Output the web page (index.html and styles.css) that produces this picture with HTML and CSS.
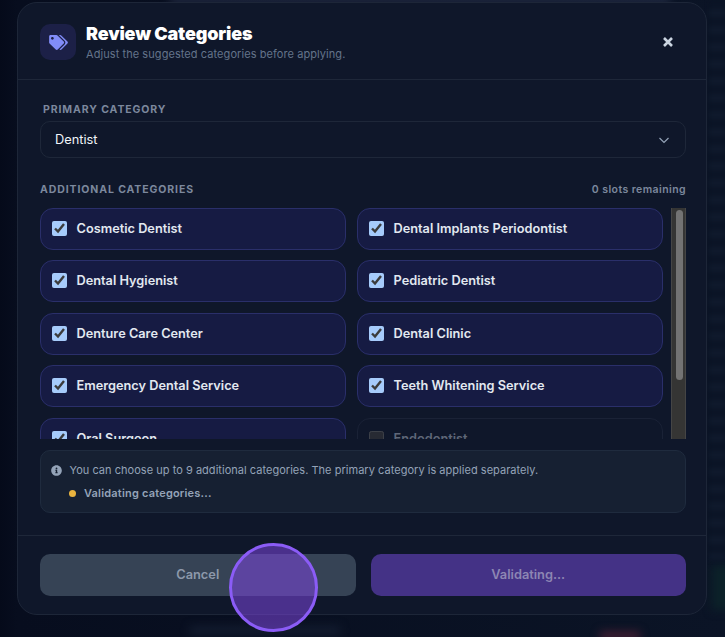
FILE: index.html
```html
<!DOCTYPE html>
<html lang="en">
<head>
<meta charset="utf-8">
<title>Review Categories</title>
<link rel="stylesheet" href="styles.css">
</head>
<body>
<div class="backdrop" aria-hidden="true">
  <span class="glow glow-top"></span>
  <span class="glow glow-bottom"></span>
  <span class="glow glow-red"></span>
  <span class="glow glow-green"></span>
  <span class="stripes"></span>
</div>
<section class="modal">
  <header class="modal-head">
    <div class="head-icon">
      <svg viewBox="0 0 640 512" class="tags"><path d="M497.941 225.941L286.059 14.059A48 48 0 0 0 252.118 0H48C21.49 0 0 21.49 0 48v204.118a48 48 0 0 0 14.059 33.941l211.882 211.882c18.744 18.745 49.136 18.746 67.882 0l204.118-204.118c18.745-18.745 18.745-49.137 0-67.882zM112 160c-26.51 0-48-21.49-48-48s21.49-48 48-48 48 21.49 48 48-21.49 48-48 48zm513.941 133.823L421.823 497.941c-18.745 18.745-49.137 18.745-67.882 0l-.36-.36L527.64 323.522c16.999-16.999 26.36-39.6 26.36-63.64s-9.362-46.641-26.36-63.64L331.397 0h48.721a48 48 0 0 1 33.941 14.059l211.882 211.882c18.745 18.745 18.745 49.137 0 67.882z"/></svg>
    </div>
    <div class="head-text">
      <h1>Review Categories</h1>
      <p>Adjust the suggested categories before applying.</p>
    </div>
    <button class="close" type="button" aria-label="Close">
      <svg viewBox="0 0 12 12"><path d="M2 2l8 8M10 2l-8 8"/></svg>
    </button>
  </header>

  <div class="modal-body">
    <div class="label primary-label">PRIMARY CATEGORY</div>
    <div class="select">
      <span>Dentist</span>
      <svg viewBox="0 0 12 12"><path d="M1.500 4l4.500 4.500L10.500 4"/></svg>
    </div>

    <div class="additional-head">
      <div class="label">ADDITIONAL CATEGORIES</div>
      <div class="slots">0 slots remaining</div>
    </div>

    <div class="list-wrap">
      <div class="list">
        <div class="grid">
          <label class="card"><input type="checkbox" checked><span>Cosmetic Dentist</span></label>
          <label class="card"><input type="checkbox" checked><span>Dental Implants Periodontist</span></label>
          <label class="card"><input type="checkbox" checked><span>Dental Hygienist</span></label>
          <label class="card"><input type="checkbox" checked><span>Pediatric Dentist</span></label>
          <label class="card"><input type="checkbox" checked><span>Denture Care Center</span></label>
          <label class="card"><input type="checkbox" checked><span>Dental Clinic</span></label>
          <label class="card"><input type="checkbox" checked><span>Emergency Dental Service</span></label>
          <label class="card"><input type="checkbox" checked><span>Teeth Whitening Service</span></label>
          <label class="card"><input type="checkbox" checked><span>Oral Surgeon</span></label>
          <label class="card off"><input type="checkbox" disabled><span>Endodontist</span></label>
        </div>
      </div>
      <div class="track"><div class="thumb"></div></div>
    </div>

    <div class="info">
      <div class="info-line">
        <svg viewBox="0 0 512 512"><path d="M256 8C119.043 8 8 119.083 8 256c0 136.997 111.043 248 248 248s248-111.003 248-248C504 119.083 392.957 8 256 8zm0 110c23.196 0 42 18.804 42 42s-18.804 42-42 42-42-18.804-42-42 18.804-42 42-42zm56 254c0 6.627-5.373 12-12 12h-88c-6.627 0-12-5.373-12-12v-24c0-6.627 5.373-12 12-12h12v-64h-12c-6.627 0-12-5.373-12-12v-24c0-6.627 5.373-12 12-12h64c6.627 0 12 5.373 12 12v100h12c6.627 0 12 5.373 12 12v24z"/></svg>
        <span>You can choose up to 9 additional categories. The primary category is applied separately.</span>
      </div>
      <div class="status"><i class="dot"></i><span>Validating categories...</span></div>
    </div>
  </div>

  <footer class="modal-foot">
    <button class="btn cancel" type="button">Cancel</button>
    <button class="btn apply" type="button">Validating...</button>
  </footer>
</section>
<div class="touch" aria-hidden="true"></div>
</body>
</html>
```
FILE: styles.css
```css
* { box-sizing: border-box; }
html, body { margin: 0; height: 100%; }
body {
  position: relative;
  width: 725px;
  height: 637px;
  overflow: hidden;
  padding: 2px 18px 0 17px;
  background: #0a1022;
  font-family: Inter, "Liberation Sans", sans-serif;
  color: #fff;
}
.backdrop { position: absolute; inset: 0; overflow: hidden; background: linear-gradient(90deg, #050a1a 0, #070d1e 17px, #0b1426 100%); }
.glow { position: absolute; display: block; filter: blur(5px); }
.glow-top { left: 170px; top: -4px; width: 500px; height: 7px; background: #27304a; }
.glow-bottom { left: 190px; top: 627px; width: 150px; height: 7px; background: #161f33; }
.glow-red { left: 600px; top: 632px; width: 40px; height: 8px; background: #4a2034; }
.glow-green { left: 712px; top: 565px; width: 20px; height: 45px; background: #0c2229; }
.stripes {
  position: absolute; left: 709px; top: 0; width: 16px; height: 560px;
  background: repeating-linear-gradient(180deg, #0b1426 0 9px, #0f192c 9px 17px);
  filter: blur(2px);
}

.modal {
  position: relative;
  width: 690px;
  height: 613px;
  display: flex;
  flex-direction: column;
  background: #0f172a;
  border: 1px solid #1d2638;
  border-radius: 20px;
}
.modal-head {
  display: flex;
  align-items: center;
  height: 77px;
  padding: 2px 28px 0 22px;
  border-bottom: 1px solid #1e2739;
}
.head-icon {
  width: 36px; height: 36px;
  flex: none;
  display: flex; align-items: center; justify-content: center;
  border-radius: 10px;
  background: #1c2047;
}
.tags { width: 19px; height: 15px; fill: #818cf8; }
.head-text { margin-left: 10px; flex: 1; }
h1 { margin: 0; font-size: 18px; line-height: 22px; font-weight: 900; letter-spacing: -0.15px; color: #fff; }
.head-text p { margin: 2px 0 0; font-size: 11px; line-height: 14px; letter-spacing: 0.07px; color: #64748b; }
.close { width: 20px; height: 20px; padding: 4px; background: none; border: 0; }
.close svg { display: block; width: 12px; height: 12px; fill: none; stroke: #cbd5e1; stroke-width: 2.600; }

.modal-body { flex: 1; padding: 23px 20px 0 22px; }
.label { font-size: 10.500px; line-height: 13px; font-weight: 700; letter-spacing: .9px; color: #7c889d; }
.primary-label { padding-left: 3px; }
.select {
  display: flex; align-items: center; justify-content: space-between;
  height: 37px; margin-top: 5px; padding: 0 15px 0 14px;
  border: 1px solid #1e2739; border-radius: 10px;
  font-size: 12.800px; color: #f1f5f9;
}
.select svg { width: 12px; height: 12px; fill: none; stroke: #94a3b8; stroke-width: 1.200; }
.additional-head { display: flex; justify-content: space-between; margin-top: 25px; }
.slots { font-size: 10.500px; line-height: 13px; font-weight: 600; letter-spacing: .42px; color: #7c889d; }

.list-wrap { display: flex; gap: 8px; height: 231px; margin-top: 12px; }
.list { flex: 1; overflow: hidden; }
.track {
  flex: none; width: 15px;
  padding: 2px 2.500px 0 3.500px;
  background: #353534;
  border-left: 1px solid #454545;
  border-right: 1px solid #454545;
}
.thumb { height: 170px; border-radius: 5px; background: #737373; }
.grid {
  display: grid;
  grid-template-columns: 306px 306px;
  column-gap: 11px;
  row-gap: 10.400px;
}
.card {
  display: flex; align-items: center;
  height: 42px; padding: 0 10px 1px 10.500px;
  background: #161b43;
  border: 1px solid #2a2f6a;
  border-radius: 13px;
  font-size: 12.750px; font-weight: 600; color: #e2e8f0;
}
.card input {
  appearance: auto;
  color-scheme: dark;
  accent-color: #a6cbfb;
  width: 15px; height: 15px; margin: 0 10px 0 0; flex: none;
}
.card.off { background: #0f172a; border-color: #1a2236; color: #5f6778; }
.card.off input { opacity: .55; }

.info {
  height: 63px; margin-top: 11px; padding: 12px 12px 0 10px;
  background: #162032;
  border: 1px solid #1f2b3e;
  border-radius: 10px;
}
.info-line { display: flex; align-items: center; gap: 7.500px; font-size: 11px; line-height: 14px; letter-spacing: .03px; color: #94a3b8; }
.info-line svg { width: 11px; height: 11px; flex: none; fill: #94a3b8; }
.status { display: flex; align-items: center; gap: 8px; margin: 9px 0 0 18px; font-size: 11px; line-height: 14px; font-weight: 600; letter-spacing: .2px; color: #94a3b8; }
.dot { width: 7px; height: 7px; border-radius: 50%; background: #e9b33f; }

.modal-foot {
  display: flex; gap: 15px;
  height: 79px; padding: 18px 20px 0 22px;
  border-top: 1px solid #1e2739;
}
.btn {
  flex: 1; height: 42px; padding: 0 0 2px; border: 0; border-radius: 10px;
  font-family: inherit; font-size: 12.800px; font-weight: 600;
}
.cancel { background: #364355; color: #8c98aa; }
.apply { background: #443286; color: #8d86b3; }

.touch {
  position: absolute; left: 229px; top: 543px;
  width: 89px; height: 89px; border-radius: 50%;
  border: 3px solid #8b5cf6;
  background: rgba(124, 70, 220, .55);
}
```
